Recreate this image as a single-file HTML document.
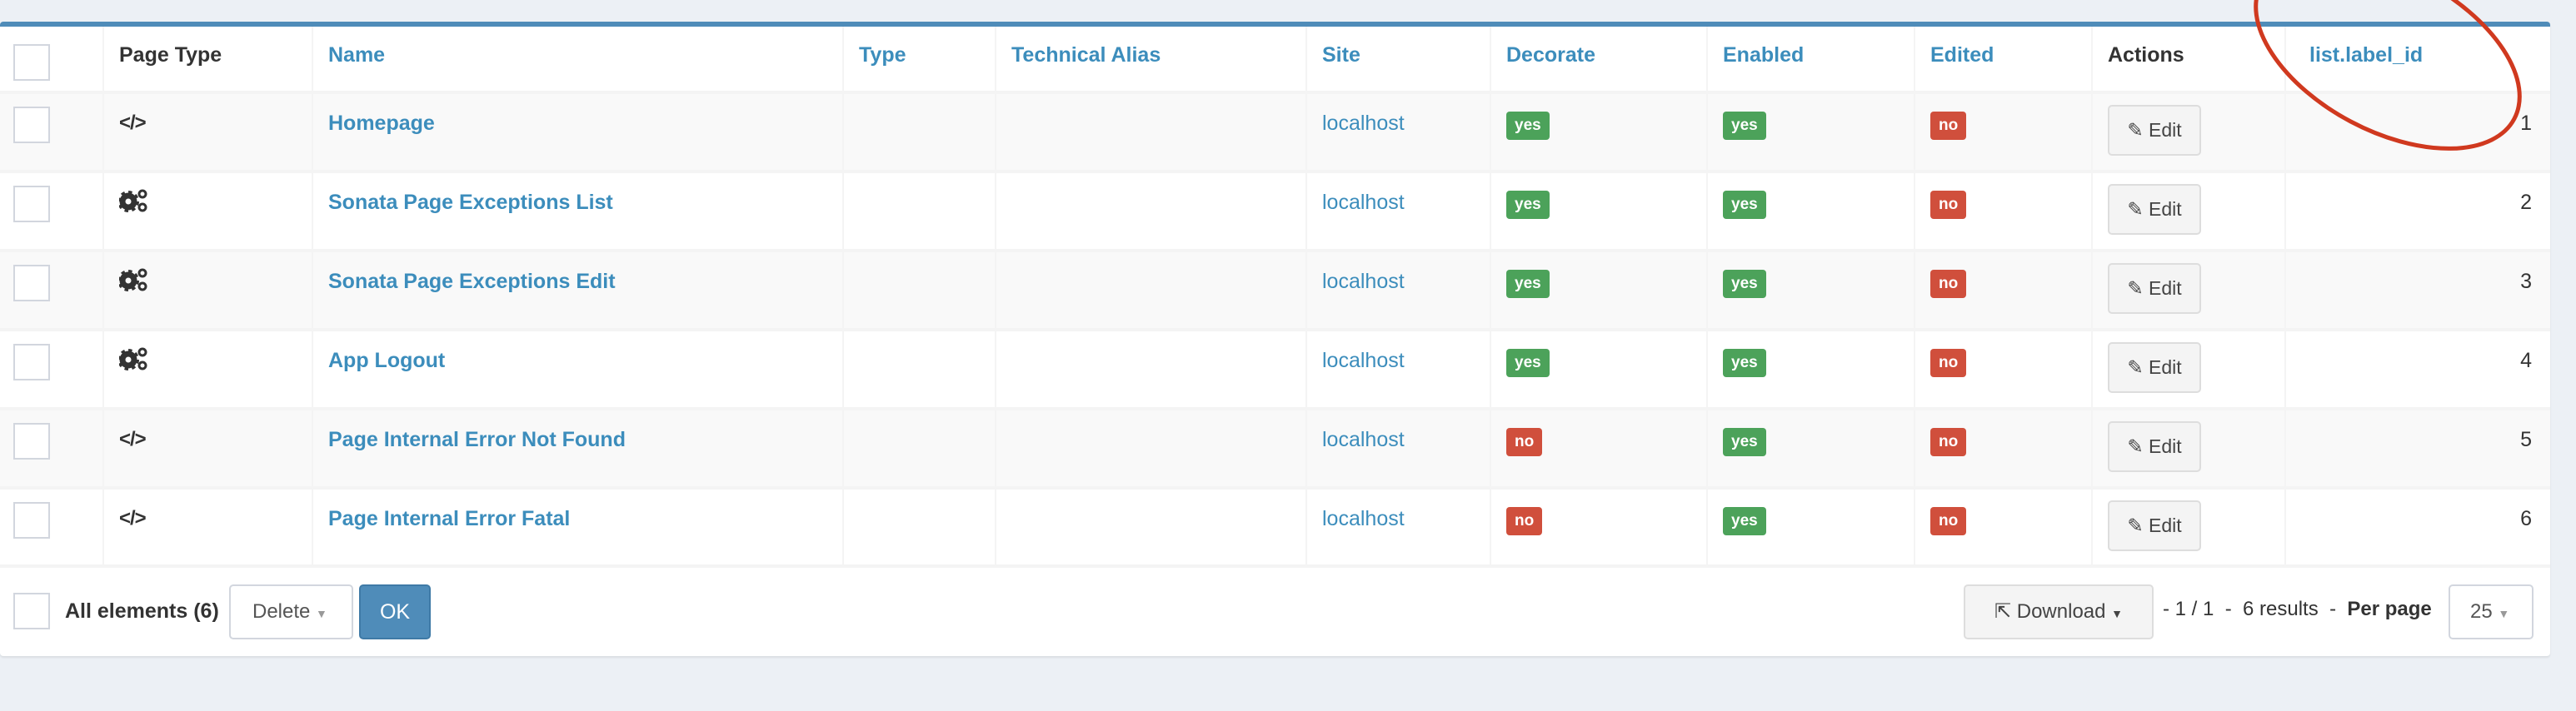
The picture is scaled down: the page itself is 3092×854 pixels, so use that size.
<!DOCTYPE html>
<html><head><meta charset="utf-8"><style>
*{box-sizing:border-box;margin:0;padding:0}
body{width:3092px;height:854px;background:#ecf0f5;font-family:"Liberation Sans",sans-serif;position:relative;overflow:hidden;color:#333}
.box{position:absolute;left:0;top:26px;width:3061px;height:762px;background:#fff;border-top:6px solid #4f8cb9;border-radius:4px;box-shadow:0 2px 2px rgba(0,0,0,.08)}
table{position:absolute;left:0;top:32px;border-collapse:collapse;table-layout:fixed;width:3061px}
td,th{border-left:2px solid #f4f4f4;vertical-align:top;text-align:left;font-size:25px;padding:0 18px;white-space:nowrap;overflow:hidden}
td:first-child,th:first-child{border-left:none}
th{height:79px;padding-top:20px;font-weight:bold;color:#333}
th.l{color:#3c8dbc}
tbody tr{height:95px}
tbody td{border-top:4px solid #f4f4f4;padding-top:17px;line-height:36px}
tbody tr:nth-child(odd){background:#f9f9f9}
.cb{display:inline-block;width:44px;height:44px;border:2px solid #d2d6de;background:#fff;margin-left:-2px}
th .cb{margin-top:1px}
tbody td .cb{margin-top:-2px}
a{color:#3c8dbc;text-decoration:none}
.nm{font-weight:bold}
.lb{display:inline-block;color:#fff;font-weight:bold;font-size:19px;line-height:34px;padding:0 10px;border-radius:4px;margin-top:2px}
.y{background:#4ca25a}.n{background:#d04f3c}
.btn{display:inline-block;height:61px;width:112px;border:2px solid #ddd;border-radius:5px;background:#f4f4f4;font-size:23px;line-height:57px;color:#444;text-align:center;margin-top:-4px}
.id{text-align:right;padding-right:22px}
.code{font-weight:bold;font-size:24px;letter-spacing:-1px}
.ft{position:absolute;left:0;top:678px;width:3061px;height:4px;background:#f4f4f4}
.abs{position:absolute}
svg.g{vertical-align:top;margin-top:2px}
</style></head><body>
<div class="box"></div>
<table>
<colgroup><col style="width:124px"><col style="width:251px"><col style="width:637px"><col style="width:183px"><col style="width:373px"><col style="width:221px"><col style="width:260px"><col style="width:249px"><col style="width:213px"><col style="width:232px"><col style="width:318px"></colgroup>
<thead><tr><th><span class="cb"></span></th><th>Page Type</th><th class="l">Name</th><th class="l">Type</th><th class="l">Technical Alias</th><th class="l">Site</th><th class="l">Decorate</th><th class="l">Enabled</th><th class="l">Edited</th><th>Actions</th><th class="l" style="padding-left:28px">list.label_id</th></tr></thead>
<tbody>
<tr><td><span class="cb"></span></td><td class="code">&lt;/&gt;</td><td><a class="nm">Homepage</a></td><td></td><td></td><td><a>localhost</a></td><td><span class="lb y">yes</span></td><td><span class="lb y">yes</span></td><td><span class="lb n">no</span></td><td><span class="btn">✎ Edit</span></td><td class="id">1</td></tr>
<tr><td><span class="cb"></span></td><td><svg class="g" width="36" height="28" viewBox="0 0 36 28"><circle cx="11" cy="15" r="7" fill="none" stroke="#333" stroke-width="7"/><circle cx="11" cy="15" r="11" fill="none" stroke="#333" stroke-width="4" stroke-dasharray="4.3 4.3"/><circle cx="28" cy="6" r="4" fill="none" stroke="#333" stroke-width="3"/><circle cx="28" cy="22" r="4" fill="none" stroke="#333" stroke-width="3"/></svg></td><td><a class="nm">Sonata Page Exceptions List</a></td><td></td><td></td><td><a>localhost</a></td><td><span class="lb y">yes</span></td><td><span class="lb y">yes</span></td><td><span class="lb n">no</span></td><td><span class="btn">✎ Edit</span></td><td class="id">2</td></tr>
<tr><td><span class="cb"></span></td><td><svg class="g" width="36" height="28" viewBox="0 0 36 28"><circle cx="11" cy="15" r="7" fill="none" stroke="#333" stroke-width="7"/><circle cx="11" cy="15" r="11" fill="none" stroke="#333" stroke-width="4" stroke-dasharray="4.3 4.3"/><circle cx="28" cy="6" r="4" fill="none" stroke="#333" stroke-width="3"/><circle cx="28" cy="22" r="4" fill="none" stroke="#333" stroke-width="3"/></svg></td><td><a class="nm">Sonata Page Exceptions Edit</a></td><td></td><td></td><td><a>localhost</a></td><td><span class="lb y">yes</span></td><td><span class="lb y">yes</span></td><td><span class="lb n">no</span></td><td><span class="btn">✎ Edit</span></td><td class="id">3</td></tr>
<tr><td><span class="cb"></span></td><td><svg class="g" width="36" height="28" viewBox="0 0 36 28"><circle cx="11" cy="15" r="7" fill="none" stroke="#333" stroke-width="7"/><circle cx="11" cy="15" r="11" fill="none" stroke="#333" stroke-width="4" stroke-dasharray="4.3 4.3"/><circle cx="28" cy="6" r="4" fill="none" stroke="#333" stroke-width="3"/><circle cx="28" cy="22" r="4" fill="none" stroke="#333" stroke-width="3"/></svg></td><td><a class="nm">App Logout</a></td><td></td><td></td><td><a>localhost</a></td><td><span class="lb y">yes</span></td><td><span class="lb y">yes</span></td><td><span class="lb n">no</span></td><td><span class="btn">✎ Edit</span></td><td class="id">4</td></tr>
<tr><td><span class="cb"></span></td><td class="code">&lt;/&gt;</td><td><a class="nm">Page Internal Error Not Found</a></td><td></td><td></td><td><a>localhost</a></td><td><span class="lb n">no</span></td><td><span class="lb y">yes</span></td><td><span class="lb n">no</span></td><td><span class="btn">✎ Edit</span></td><td class="id">5</td></tr>
<tr><td><span class="cb"></span></td><td class="code">&lt;/&gt;</td><td><a class="nm">Page Internal Error Fatal</a></td><td></td><td></td><td><a>localhost</a></td><td><span class="lb n">no</span></td><td><span class="lb y">yes</span></td><td><span class="lb n">no</span></td><td><span class="btn">✎ Edit</span></td><td class="id">6</td></tr>
</tbody></table>
<div class="ft"></div>
<div class="abs cb" style="left:18px;top:712px"></div>
<div class="abs" style="left:78px;top:716px;font-size:25px;font-weight:bold;line-height:36px">All elements (6)</div>
<div class="abs" style="left:275px;top:702px;width:149px;height:66px;border:2px solid #d2d6de;border-radius:5px;font-size:24px;line-height:62px;padding-left:26px;color:#555">Delete <span style="font-size:14px;color:#999">▼</span></div>
<div class="abs" style="left:431px;top:702px;width:86px;height:66px;background:#4f8cb9;border:2px solid #3f7aa6;border-radius:5px;font-size:25px;line-height:62px;text-align:center;color:#fff">OK</div>
<div class="abs" style="left:2357px;top:702px;width:228px;height:66px;background:#f4f4f4;border:2px solid #ddd;border-radius:5px;font-size:24px;line-height:62px;text-align:center;color:#444">⇱ Download <span style="font-size:14px">▼</span></div>
<div class="abs" style="left:2596px;top:714px;font-size:24px;line-height:36px;color:#333">- 1 / 1 &nbsp;- &nbsp;6 results &nbsp;- &nbsp;<b>Per page</b></div>
<div class="abs" style="left:2939px;top:702px;width:102px;height:66px;border:2px solid #d2d6de;border-radius:5px;font-size:24px;line-height:62px;padding-left:24px;color:#555">25 <span style="font-size:14px;color:#999">▼</span></div>
<svg class="abs" style="left:0;top:0" width="3092" height="854"><ellipse cx="2866" cy="62" rx="172" ry="95" transform="rotate(28 2866 62)" fill="none" stroke="#d0391f" stroke-width="5"/></svg>
</body></html>
